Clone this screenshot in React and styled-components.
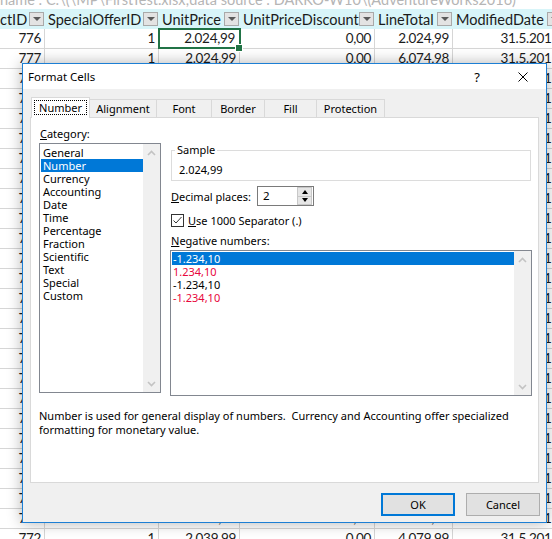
import React from 'react';
import styled, { createGlobalStyle, css } from 'styled-components';

const GlobalStyle = createGlobalStyle`
  html, body {
    margin: 0;
    padding: 0;
    background: #ffffff;
  }
  body {
    font-family: "Noto Sans", "Open Sans", sans-serif;
  }
  * {
    box-sizing: border-box;
  }
`;

const Screen = styled.div`
  position: relative;
  width: 552px;
  height: 539px;
  overflow: hidden;
  background: #ffffff;
`;

/* ---------- the sheet behind the dialog ---------- */

const Sheet = styled.div`
  display: flex;
  flex-direction: column;
  margin-left: -3px;
  font-family: Lato, "Liberation Sans", sans-serif;
  color: #1b1b1b;
`;

const PathStrip = styled.div`
  height: 9px;
  overflow: hidden;
  white-space: nowrap;
`;

const PathText = styled.div`
  margin-top: -8px;
  padding-left: 3px;
  line-height: 16px;
  font-size: 14.5px;
  color: #b5b5b5;
`;

const HeaderRow = styled.div`
  display: flex;
  height: 20px;
  background: #d8f5f9;
`;

const HeaderCell = styled.div`
  flex: none;
  width: ${(p) => p.$w}px;
  display: flex;
  align-items: center;
  justify-content: space-between;
  padding: 0 1px 0 3px;
  font-size: 14.5px;
  white-space: nowrap;
  overflow: hidden;
`;

const FilterButton = styled.div`
  flex: none;
  width: 15px;
  height: 14px;
  display: flex;
  align-items: center;
  justify-content: center;
  background: #e3e3e3;
  border: 1px solid #a9a9a9;

  &::before {
    content: '';
    border-left: 4px solid transparent;
    border-right: 4px solid transparent;
    border-top: 4px solid #5a5a5a;
  }
`;

const DataRow = styled.div`
  display: flex;
  height: 20px;
  border-bottom: 1px solid #d6d6d6;
`;

const DataCell = styled.div`
  flex: none;
  position: relative;
  width: ${(p) => p.$w}px;
  padding-right: 3px;
  text-align: right;
  line-height: 19px;
  font-size: 13.5px;
  letter-spacing: -0.3px;
  white-space: nowrap;
  border-right: 1px solid #d6d6d6;
  overflow: ${(p) => (p.$selected ? 'visible' : 'hidden')};

  ${(p) =>
    p.$selected &&
    css`
      z-index: 1;
      outline: 2px solid #217346;
      outline-offset: -1px;
      padding-right: 4px;

      &::after {
        content: '';
        position: absolute;
        right: -4px;
        bottom: -4px;
        width: 6px;
        height: 6px;
        background: #217346;
        border: 1px solid #ffffff;
      }
    `}
`;

/* ---------- Format Cells dialog ---------- */

const Dialog = styled.div`
  position: absolute;
  left: 22px;
  top: 63px;
  width: 525px;
  height: 460px;
  display: flex;
  flex-direction: column;
  background: #f0f0f0;
  border: 1px solid #1d7fd4;
  box-shadow: 0 0 14px rgba(0, 0, 0, 0.3);
  font-family: "Noto Sans", "Open Sans", sans-serif;
  font-size: 11px;
  color: #000000;
`;

const TitleBar = styled.div`
  display: flex;
  height: 25px;
  background: #ffffff;
`;

const Title = styled.div`
  flex: 1;
  display: flex;
  align-items: center;
  padding-left: 5px;
  font-size: 11.5px;
`;

const CaptionButton = styled.div`
  width: 46px;
  display: flex;
  align-items: center;
  justify-content: center;
  font-size: 13px;
`;

const Body = styled.div`
  flex: 1;
  display: flex;
  flex-direction: column;
  padding: 8px 7px 0 7px;
`;

const TabStrip = styled.div`
  display: flex;
  align-items: flex-end;
  height: 20px;
  padding-left: 1px;
  position: relative;
  z-index: 1;
`;

const Tab = styled.div`
  flex: none;
  width: ${(p) => p.$w}px;
  height: ${(p) => (p.$active ? 21 : 18)}px;
  margin-left: -1px;
  margin-bottom: ${(p) => (p.$active ? -1 : 0)}px;
  display: flex;
  align-items: center;
  justify-content: center;
  padding-bottom: ${(p) => (p.$active ? 2 : 0)}px;
  background: ${(p) => (p.$active ? '#ffffff' : '#f0f0f0')};
  border: 1px solid #d9d9d9;
  border-bottom: none;
  &:first-child {
    margin-left: 0;
  }
`;

const FocusLabel = styled.span`
  padding: 0 4px;
  line-height: 13px;
  outline: 1px dotted #000000;
  outline-offset: 0;
`;

const Panel = styled.div`
  flex: none;
  height: 366px;
  display: flex;
  flex-direction: column;
  background: #ffffff;
  border: 1px solid #d9d9d9;
  padding: 9px 6px 0 8px;
`;

const Columns = styled.div`
  display: grid;
  grid-template-columns: 122px 362px;
  column-gap: 9px;
  align-items: start;
`;

const Column = styled.div`
  display: flex;
  flex-direction: column;
`;

const Label = styled.div`
  line-height: 14px;
  height: 14px;
  padding-left: ${(p) => p.$indent || 0}px;
  margin-top: ${(p) => p.$top || 0}px;
  white-space: nowrap;
`;

const Key = styled.span`
  text-decoration: underline;
  text-underline-offset: 1px;
`;

const ListBox = styled.div`
  display: flex;
  height: ${(p) => p.$h}px;
  margin-top: 2px;
  border: 1px solid #828790;
  background: #ffffff;
`;

const ListItems = styled.div`
  flex: 1;
  display: flex;
  flex-direction: column;
  padding: ${(p) => p.$pad}px 0 0 1px;
`;

const ListItem = styled.div`
  height: 13px;
  line-height: 13px;
  padding-left: ${(p) => p.$indent}px;
  white-space: nowrap;
  color: ${(p) => (p.$active ? '#ffffff' : p.$red ? '#e8063c' : '#000000')};
  background: ${(p) => (p.$active ? '#0078d7' : 'transparent')};
`;

const ScrollBar = styled.div`
  flex: none;
  width: 17px;
  display: flex;
  flex-direction: column;
  justify-content: space-between;
  background: #f0f0f0;
`;

const ScrollButton = styled.div`
  height: 17px;
  display: flex;
  align-items: center;
  justify-content: center;
`;

const GroupBox = styled.div`
  margin: 23px 1px 0 1px;
  border: 1px solid #dcdcdc;
  padding: 0 7px 3px 7px;
`;

const GroupLegend = styled.div`
  width: fit-content;
  margin: -8px 0 0 -4px;
  padding: 0 2px;
  line-height: 14px;
  background: #ffffff;
`;

const GroupValue = styled.div`
  margin-top: 6px;
  line-height: 14px;
`;

const FieldRow = styled.div`
  display: flex;
  align-items: center;
  height: ${(p) => p.$h}px;
  margin-top: ${(p) => p.$top}px;
  padding-left: 1px;
`;

const FieldLabel = styled.div`
  width: 86px;
  flex: none;
`;

const SpinBox = styled.div`
  display: flex;
  width: 57px;
  height: 20px;
  border: 1px solid #7a7a7a;
  background: #ffffff;
`;

const SpinValue = styled.div`
  flex: 1;
  padding-left: 5px;
  line-height: 18px;
  font-size: 11.5px;
`;

const SpinButtons = styled.div`
  flex: none;
  width: 15px;
  display: flex;
  flex-direction: column;
  margin: 0 1px 0 0;
`;

const SpinHalf = styled.div`
  flex: 1;
  display: flex;
  align-items: center;
  justify-content: center;
  background: #e6e6e6;
  border: 1px solid #c8c8c8;
  border-top-width: ${(p) => (p.$down ? 0 : 1)}px;

  &::before {
    content: '';
    border-left: 3.5px solid transparent;
    border-right: 3.5px solid transparent;
    ${(p) =>
      p.$down
        ? css`border-top: 4px solid #000000;`
        : css`border-bottom: 4px solid #000000;`}
  }
`;

const CheckBox = styled.div`
  flex: none;
  width: 13px;
  height: 13px;
  margin-right: 4px;
  border: 1px solid #333333;
  background: #ffffff;
  display: flex;
  align-items: center;
  justify-content: center;
`;

const Description = styled.div`
  margin-top: 13px;
  line-height: 14px;
  white-space: nowrap;
`;

const Footer = styled.div`
  display: flex;
  justify-content: flex-end;
  gap: 11px;
  margin: 10px -1px 0 0;
`;

const Button = styled.div`
  width: 74px;
  height: 23px;
  display: flex;
  align-items: center;
  justify-content: center;
  background: #e1e1e1;
  border: ${(p) => (p.$primary ? '2px solid #0078d7' : '1px solid #adadad')};
  font-size: 11px;
`;

const Chevron = ({ down }) => (
  <svg width="9" height="6" viewBox="0 0 9 6">
    <polyline
      points={down ? '1,1 4.5,4.5 8,1' : '1,5 4.5,1.5 8,5'}
      fill="none"
      stroke="#c3c3c3"
      strokeWidth="1.6"
    />
  </svg>
);

const widths = [48, 114, 81, 135, 78, 110];
const headers = ['ctID', 'SpecialOfferID', 'UnitPrice', 'UnitPriceDiscount', 'LineTotal', 'ModifiedDate'];

const filler = ['778', '1', '2.024,99', '0,00', '2.024,99', '31.5.2011'];
const rows = [
  ['776', '1', '2.024,99', '0,00', '2.024,99', '31.5.2011'],
  ['777', '1', '2.024,99', '0,00', '6.074,98', '31.5.2011'],
  ...Array.from({ length: 22 }, () => filler),
  ['773', '2', '2.024,99', '0,00', '4.049,98', '31.5.2011'],
  ['772', '1', '2.039,99', '0,00', '4.079,99', '31.5.2011'],
];

const tabs = [
  ['Number', 59],
  ['Alignment', 68],
  ['Font', 56],
  ['Border', 54],
  ['Fill', 53],
  ['Protection', 69],
];

const categories = [
  'General', 'Number', 'Currency', 'Accounting', 'Date', 'Time',
  'Percentage', 'Fraction', 'Scientific', 'Text', 'Special', 'Custom',
];

const negatives = [
  { text: '-1.234,10', red: false },
  { text: '1.234,10', red: true },
  { text: '-1.234,10', red: false },
  { text: '-1.234,10', red: true },
];

const App = () => {
  return (
    <Screen>
      <GlobalStyle />
      <Sheet>
        <PathStrip>
          <PathText>name : C:\(\MP\FirstTest.xlsx;data source : DARKO-W10\(AdventureWorks2016)</PathText>
        </PathStrip>
        <HeaderRow>
          {headers.map((h, i) => (
            <HeaderCell key={h} $w={widths[i]}>
              <span>{h}</span>
              <FilterButton />
            </HeaderCell>
          ))}
        </HeaderRow>
        {rows.map((r, ri) => (
          <DataRow key={ri}>
            {r.map((v, ci) => (
              <DataCell key={ci} $w={widths[ci]} $selected={ri === 0 && ci === 2}>
                {v}
              </DataCell>
            ))}
          </DataRow>
        ))}
      </Sheet>

      <Dialog>
        <TitleBar>
          <Title>Format Cells</Title>
          <CaptionButton>?</CaptionButton>
          <CaptionButton>
            <svg width="10" height="10" viewBox="0 0 10 10">
              <path d="M0.5 0.5 L9.5 9.5 M9.5 0.5 L0.5 9.5" stroke="#000" strokeWidth="1" />
            </svg>
          </CaptionButton>
        </TitleBar>

        <Body>
          <TabStrip>
            {tabs.map(([name, w], i) => (
              <Tab key={name} $w={w} $active={i === 0}>
                {i === 0 ? <FocusLabel>{name}</FocusLabel> : name}
              </Tab>
            ))}
          </TabStrip>

          <Panel>
            <Columns>
              <Column>
                <Label $indent={1}>
                  <Key>C</Key>ategory:
                </Label>
                <ListBox $h={250}>
                  <ListItems $pad={2}>
                    {categories.map((c) => (
                      <ListItem key={c} $indent={2} $active={c === 'Number'}>
                        {c}
                      </ListItem>
                    ))}
                  </ListItems>
                  <ScrollBar>
                    <ScrollButton>
                      <Chevron />
                    </ScrollButton>
                    <ScrollButton>
                      <Chevron down />
                    </ScrollButton>
                  </ScrollBar>
                </ListBox>
              </Column>

              <Column>
                <GroupBox>
                  <GroupLegend>Sample</GroupLegend>
                  <GroupValue>2.024,99</GroupValue>
                </GroupBox>

                <FieldRow $h={20} $top={5}>
                  <FieldLabel>
                    <Key>D</Key>ecimal places:
                  </FieldLabel>
                  <SpinBox>
                    <SpinValue>2</SpinValue>
                    <SpinButtons>
                      <SpinHalf />
                      <SpinHalf $down />
                    </SpinButtons>
                  </SpinBox>
                </FieldRow>

                <FieldRow $h={14} $top={7}>
                  <CheckBox>
                    <svg width="11" height="11" viewBox="0 0 11 11">
                      <polyline points="1.5,5.5 4,8 9.5,2" fill="none" stroke="#333" strokeWidth="1" />
                    </svg>
                  </CheckBox>
                  <span>
                    <Key>U</Key>se 1000 Separator (.)
                  </span>
                </FieldRow>

                <Label $indent={1} $top={7}>
                  <Key>N</Key>egative numbers:
                </Label>
                <ListBox $h={146}>
                  <ListItems $pad={1}>
                    {negatives.map((n, i) => (
                      <ListItem key={i} $indent={1} $red={n.red} $active={i === 0}>
                        {n.text}
                      </ListItem>
                    ))}
                  </ListItems>
                  <ScrollBar>
                    <ScrollButton>
                      <Chevron />
                    </ScrollButton>
                    <ScrollButton>
                      <Chevron down />
                    </ScrollButton>
                  </ScrollBar>
                </ListBox>
              </Column>
            </Columns>

            <Description>
              Number is used for general display of numbers.{'\u00a0'} Currency and Accounting offer specialized
              <br />
              formatting for monetary value.
            </Description>
          </Panel>

          <Footer>
            <Button $primary>OK</Button>
            <Button>Cancel</Button>
          </Footer>
        </Body>
      </Dialog>
    </Screen>
  );
};

export default App;
